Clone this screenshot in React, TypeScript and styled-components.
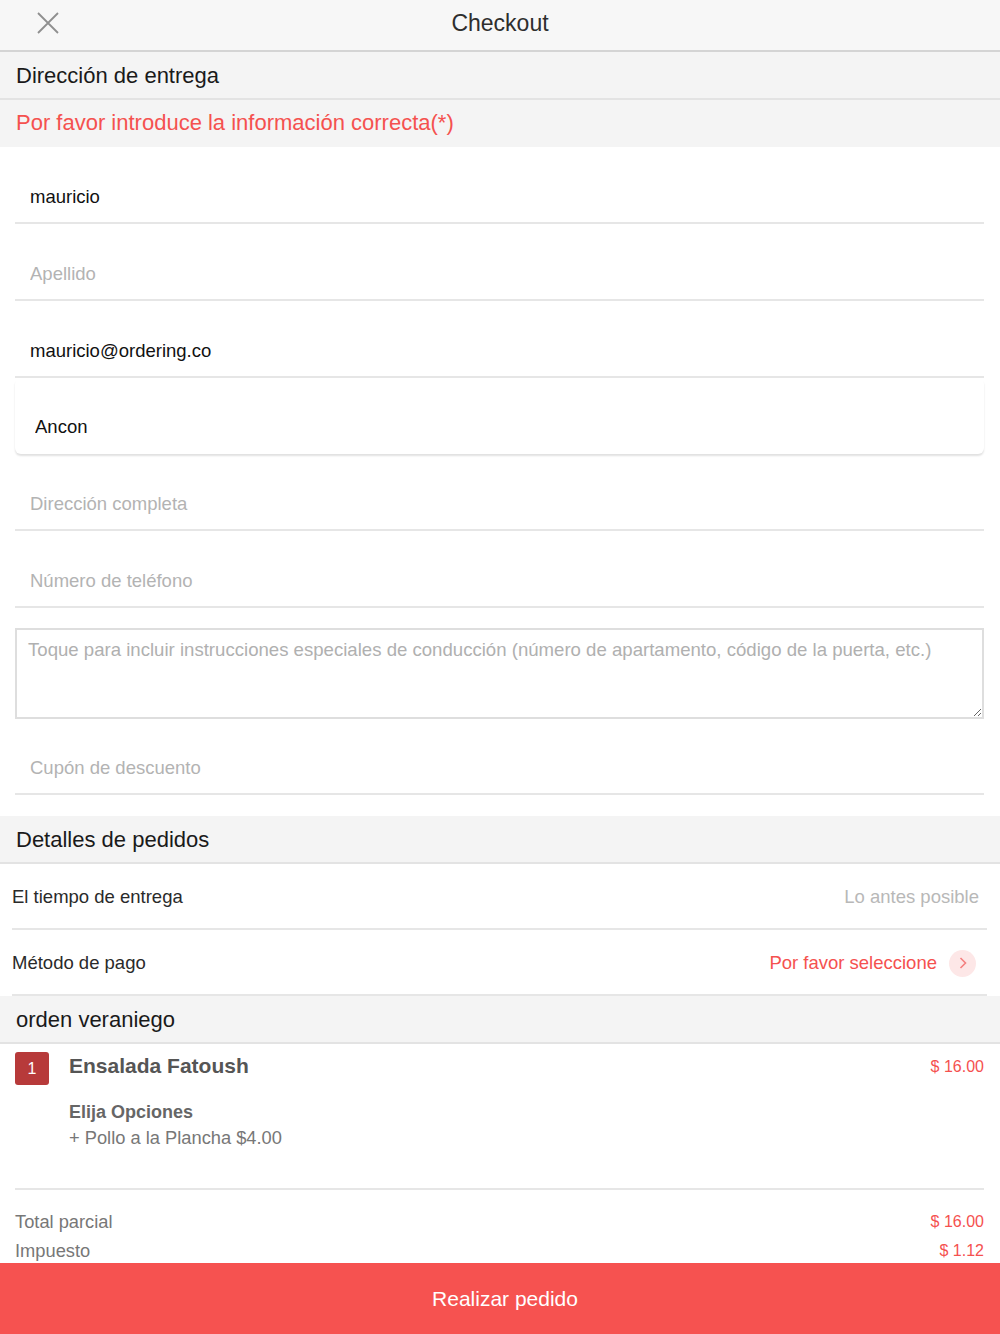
import styled, { createGlobalStyle } from 'styled-components';

const GlobalStyle = createGlobalStyle`
  * { box-sizing: border-box; }
  html, body { margin: 0; padding: 0; background: #ffffff; }
  body { font-family: "Liberation Sans", Arial, sans-serif; color: #222; }
`;

const Screen = styled.div`
  width: 1000px;
  height: 1334px;
  display: flex;
  flex-direction: column;
  overflow: hidden;
  background: #ffffff;
`;

const TopBar = styled.header`
  height: 52px;
  flex-shrink: 0;
  display: grid;
  grid-template-columns: 96px 1fr 96px;
  align-items: center;
  background: #f7f7f7;
  border-bottom: 2px solid #d4d4d4;
  padding-bottom: 4px;
`;

const CloseButton = styled.button`
  border: 0;
  background: none;
  padding: 0 0 0 36px;
  display: flex;
  align-items: center;
  cursor: pointer;
`;

const TopTitle = styled.h1`
  margin: 0;
  text-align: center;
  font-size: 23px;
  font-weight: 400;
  color: #2e2e2e;
`;

const Scroll = styled.main`
  flex: 1;
  overflow: hidden;
  display: flex;
  flex-direction: column;
`;

const SectionHeader = styled.div`
  height: 48px;
  flex-shrink: 0;
  display: flex;
  align-items: center;
  padding: 2px 16px 0;
  background: #f4f4f4;
  border-bottom: 2px solid #e3e3e3;
  font-size: 22px;
  color: #1a1a1a;
`;

const ErrorBanner = styled.div`
  height: 47px;
  flex-shrink: 0;
  display: flex;
  align-items: center;
  padding: 0 16px 1px;
  background: #f4f4f4;
  font-size: 22px;
  color: #f5514f;
`;

const Form = styled.div`
  display: flex;
  flex-direction: column;
  padding: 0 16px 0 15px;
  margin-bottom: 21px;
`;

const Field = styled.div<{ $card?: boolean }>`
  height: ${({ $card }) => ($card ? '76px' : '77px')};
  flex-shrink: 0;
  display: flex;
  align-items: flex-end;
  padding: 0 0 ${({ $card }) => ($card ? '15px' : '13px')} ${({ $card }) => ($card ? '20px' : '15px')};
  border-bottom: ${({ $card }) => ($card ? '0' : '2px solid #e6e6e6')};
  border-radius: ${({ $card }) => ($card ? '6px' : '0')};
  box-shadow: ${({ $card }) => ($card ? '0 2px 2px rgba(0,0,0,0.12)' : 'none')};

  &:last-child {
    height: 76px;
  }
`;

const TextInput = styled.input`
  width: 100%;
  border: 0;
  outline: none;
  padding: 0;
  background: transparent;
  font-family: inherit;
  font-size: 18.5px;
  line-height: 24px;
  color: #111;

  &::placeholder { color: #b3b3b3; }
`;

const Notes = styled.textarea`
  margin-top: 20px;
  height: 91px;
  flex-shrink: 0;
  width: 100%;
  border: 2px solid #dedede;
  padding: 8px 11px;
  font-family: inherit;
  font-size: 18.6px;
  line-height: 24px;
  color: #111;
  resize: vertical;
  outline: none;

  &::placeholder { color: #b0b0b0; }
`;

const DetailRow = styled.div`
  height: 66px;
  flex-shrink: 0;
  display: flex;
  align-items: center;
  justify-content: space-between;
  margin: 0 13px 0 12px;
  padding: 2px 8px 0 0;
  border-bottom: 2px solid #e6e6e6;
  font-size: 18.5px;
  color: #2a2a2a;
`;

const DetailValue = styled.span<{ $accent?: boolean }>`
  display: flex;
  align-items: center;
  gap: 12px;
  color: ${({ $accent }) => ($accent ? '#f5514f' : '#b8b8b8')};
  margin-right: ${({ $accent }) => ($accent ? '3px' : '0')};
`;

const Chevron = styled.span`
  width: 27px;
  height: 27px;
  border-radius: 50%;
  background: #fde7e7;
  display: flex;
  align-items: center;
  justify-content: center;
`;

const Item = styled.div`
  display: grid;
  grid-template-columns: 34px 1fr auto;
  column-gap: 20px;
  padding: 8px 16px 0 15px;
  height: 144px;
  flex-shrink: 0;
`;

const QtyBadge = styled.div`
  width: 34px;
  height: 33px;
  border-radius: 3px;
  background: #b73a3a;
  color: #fff;
  font-size: 16px;
  display: flex;
  align-items: center;
  justify-content: center;
`;

const ItemInfo = styled.div`
  display: flex;
  flex-direction: column;
`;

const ItemName = styled.div`
  font-size: 21px;
  font-weight: 700;
  color: #555;
  line-height: 28px;
  margin-bottom: 19px;
`;

const OptionTitle = styled.div`
  font-size: 18px;
  font-weight: 700;
  color: #666;
  line-height: 26px;
`;

const OptionLine = styled.div`
  font-size: 18.3px;
  color: #777;
  line-height: 26px;
`;

const Price = styled.div`
  font-size: 16px;
  color: #f5514f;
  line-height: 30px;
`;

const Divider = styled.div`
  flex-shrink: 0;
  margin: 0 16px 0 15px;
  border-top: 2px solid #e6e6e6;
`;

const Totals = styled.div`
  padding: 17px 16px 0 15px;
  display: flex;
  flex-direction: column;
`;

const TotalRow = styled.div`
  display: flex;
  justify-content: space-between;
  align-items: center;
  height: 29px;
  font-size: 18.3px;
  color: #777;
`;

const TotalValue = styled.span`
  font-size: 16px;
  color: #f5514f;
`;

const SubmitButton = styled.button`
  height: 71px;
  flex-shrink: 0;
  width: 100%;
  border: 0;
  background: #f65250;
  color: #fff;
  font-family: inherit;
  font-size: 21px;
  padding-left: 16px;
  cursor: pointer;
`;

export default function App() {
  return (
    <>
      <GlobalStyle />
      <Screen>
        <TopBar>
          <CloseButton aria-label="Cerrar">
            <svg width="24" height="24" viewBox="0 0 24 24">
              <path d="M2 2 L22 22 M22 2 L2 22" stroke="#8f8f8f" strokeWidth="1.8" fill="none" />
            </svg>
          </CloseButton>
          <TopTitle>Checkout</TopTitle>
          <span />
        </TopBar>

        <Scroll>
          <SectionHeader>Dirección de entrega</SectionHeader>
          <ErrorBanner>Por favor introduce la información correcta(*)</ErrorBanner>

          <Form>
            <Field><TextInput defaultValue="mauricio" /></Field>
            <Field><TextInput placeholder="Apellido" /></Field>
            <Field><TextInput defaultValue="mauricio@ordering.co" /></Field>
            <Field $card><TextInput defaultValue="Ancon" /></Field>
            <Field><TextInput placeholder="Dirección completa" /></Field>
            <Field><TextInput placeholder="Número de teléfono" /></Field>
            <Notes placeholder="Toque para incluir instrucciones especiales de conducción (número de apartamento, código de la puerta, etc.)" />
            <Field><TextInput placeholder="Cupón de descuento" /></Field>
          </Form>

          <SectionHeader>Detalles de pedidos</SectionHeader>
          <DetailRow>
            <span>El tiempo de entrega</span>
            <DetailValue>Lo antes posible</DetailValue>
          </DetailRow>
          <DetailRow>
            <span>Método de pago</span>
            <DetailValue $accent>
              Por favor seleccione
              <Chevron>
                <svg width="12" height="14" viewBox="0 0 12 14">
                  <path d="M3.5 2 L8.5 7 L3.5 12" stroke="#f58080" strokeWidth="1.6" fill="none" />
                </svg>
              </Chevron>
            </DetailValue>
          </DetailRow>

          <SectionHeader>orden veraniego</SectionHeader>
          <Item>
            <QtyBadge>1</QtyBadge>
            <ItemInfo>
              <ItemName>Ensalada Fatoush</ItemName>
              <OptionTitle>Elija Opciones</OptionTitle>
              <OptionLine>+ Pollo a la Plancha $4.00</OptionLine>
            </ItemInfo>
            <Price>$ 16.00</Price>
          </Item>
          <Divider />
          <Totals>
            <TotalRow>
              <span>Total parcial</span>
              <TotalValue>$ 16.00</TotalValue>
            </TotalRow>
            <TotalRow>
              <span>Impuesto</span>
              <TotalValue>$ 1.12</TotalValue>
            </TotalRow>
          </Totals>
        </Scroll>

        <SubmitButton>Realizar pedido</SubmitButton>
      </Screen>
    </>
  );
}
